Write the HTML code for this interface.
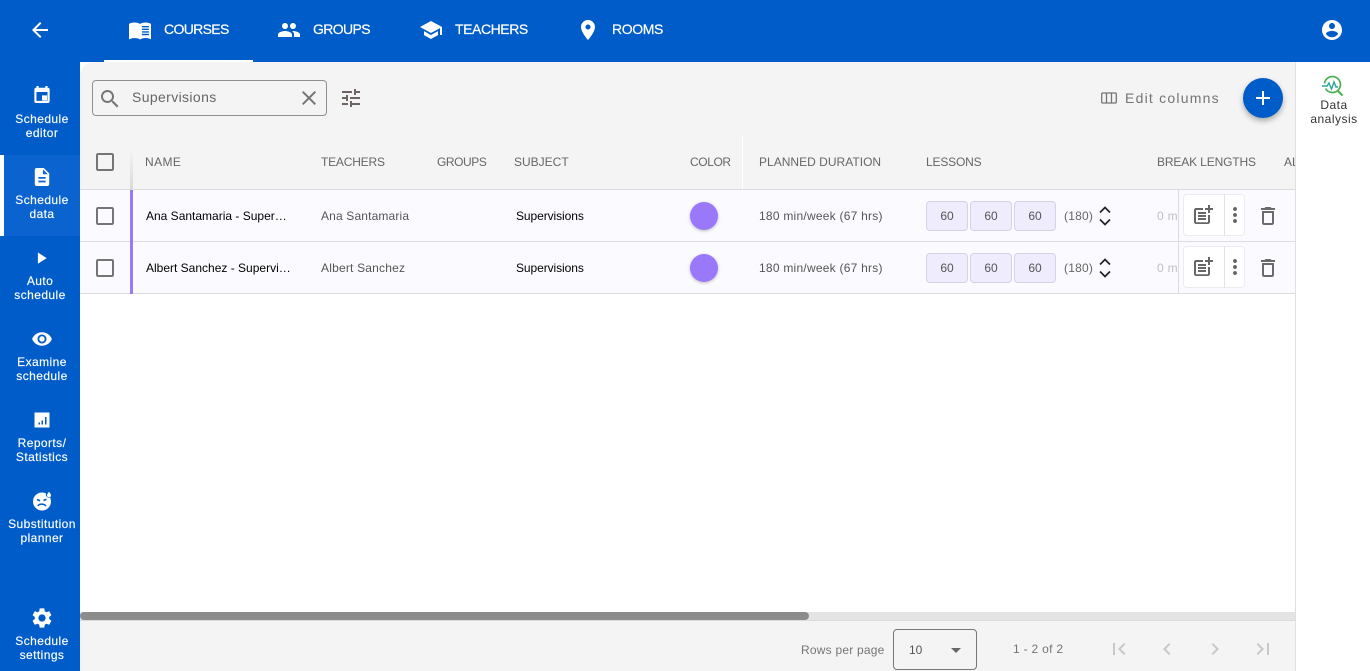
<!DOCTYPE html>
<html lang="en"><head><meta charset="utf-8"><title>Courses</title>
<style>
*{box-sizing:border-box}
html,body{margin:0;padding:0;width:1370px;height:671px;overflow:hidden;background:#fff;font-family:"Liberation Sans",Arial,sans-serif}
.a{position:absolute;white-space:nowrap}
svg{position:absolute;display:block}
#top{left:0;top:0;width:1370px;height:62px;background:#005cc9}
#side{left:0;top:62px;width:80px;height:609px;background:#005cc9}
#main{left:80px;top:62px;width:1215px;height:609px;background:#f4f4f4;border-top-left-radius:14px;overflow:hidden}
.tab{color:#fff;font-size:14px;line-height:16px;top:21px;-webkit-text-stroke:.2px #fff}
.nav{left:0;width:84px;text-align:center;color:#fff;font-size:12px;line-height:14px;white-space:nowrap;letter-spacing:.42px;-webkit-text-stroke:.15px #fff}
.h{font-size:12px;line-height:14px;top:155px;color:#666}
.t{font-size:12px;line-height:14px;color:#555}
.b{color:#000}
.chip{width:42px;height:30px;background:#efecfd;border:1px solid #d6d1e6;border-radius:4px;text-align:center;font-size:12px;line-height:28px;color:#555}
.bar{left:130px;width:3px;background:#9a78fa}
.row{left:80px;width:1215px;height:52px;background:#fbfaff;border-bottom:1px solid #dcdce0}
</style></head><body>

<div class="a" id="top"></div>
<div class="a" id="side"></div>
<div class="a" id="main"></div>
<div class="a" style="left:1295px;top:62px;width:75px;height:609px;background:#fff;border-left:1px solid #e0e0e0"></div>

<!-- top bar -->
<svg style="left:28px;top:18px" width="24" height="24" viewBox="0 0 24 24" fill="#fff"><path d="M20 11H7.83l5.59-5.59L12 4l-8 8 8 8 1.41-1.41L7.83 13H20v-2z"/></svg>
<div class="a" style="left:104px;top:60px;width:149px;height:2px;background:#fff"></div>
<svg style="left:128px;top:18px" width="24" height="24" viewBox="0 0 24 24" fill="#fff"><path d="M21 5c-1.11-.35-2.33-.5-3.5-.5-1.95 0-4.05.4-5.5 1.5-1.45-1.1-3.55-1.5-5.5-1.5S2.45 4.9 1 6v14.65c0 .25.25.5.5.5.1 0 .15-.05.25-.05C3.1 20.45 5.05 20 6.5 20c1.95 0 4.05.4 5.5 1.5 1.35-.85 3.8-1.5 5.5-1.5 1.65 0 3.35.3 4.75 1.05.1.05.15.05.25.05.25 0 .5-.25.5-.5V6c-.6-.45-1.25-.75-2-1z"/><path fill="#005cc9" d="M13.5 8h7v1.4h-7zM13.5 10.6h7V12h-7zM13.5 13.2h7v1.4h-7zM13.5 15.8h7v1.4h-7z" transform="translate(.4 0)"/></svg>
<div class="a tab" style="left:164px;letter-spacing:-.65px">COURSES</div>
<svg style="left:277px;top:18px" width="24" height="24" viewBox="0 0 24 24" fill="#fff"><path d="M16 11c1.66 0 2.99-1.34 2.99-3S17.66 5 16 5c-1.66 0-3 1.34-3 3s1.34 3 3 3zm-8 0c1.66 0 2.99-1.34 2.99-3S9.66 5 8 5C6.34 5 5 6.34 5 8s1.34 3 3 3zm0 2c-2.33 0-7 1.17-7 3.5V19h14v-2.5c0-2.33-4.67-3.5-7-3.5zm8 0c-.29 0-.62.02-.97.05 1.16.84 1.97 1.97 1.97 3.45V19h6v-2.5c0-2.33-4.67-3.5-7-3.5z"/></svg>
<div class="a tab" style="left:313px;letter-spacing:-.63px">GROUPS</div>
<svg style="left:419px;top:18px" width="24" height="24" viewBox="0 0 24 24" fill="#fff"><path d="M5 13.18v4L12 21l7-3.82v-4L12 17l-7-3.82zM12 3L1 9l11 6 9-4.91V17h2V9L12 3z"/></svg>
<div class="a tab" style="left:455px;letter-spacing:-.43px">TEACHERS</div>
<svg style="left:576px;top:18px" width="24" height="24" viewBox="0 0 24 24" fill="#fff"><path d="M12 2C8.13 2 5 5.13 5 9c0 5.25 7 13 7 13s7-7.75 7-13c0-3.87-3.13-7-7-7zm0 9.5c-1.38 0-2.5-1.12-2.5-2.5s1.12-2.5 2.5-2.5 2.5 1.12 2.5 2.5-1.12 2.5-2.5 2.5z"/></svg>
<div class="a tab" style="left:612px;letter-spacing:-.4px">ROOMS</div>
<svg style="left:1320px;top:18px" width="24" height="24" viewBox="0 0 24 24" fill="#fff"><path d="M12 2C6.48 2 2 6.48 2 12s4.48 10 10 10 10-4.48 10-10S17.52 2 12 2zm0 3c1.66 0 3 1.34 3 3s-1.34 3-3 3-3-1.34-3-3 1.34-3 3-3zm0 14.2c-2.5 0-4.71-1.28-6-3.22.03-1.99 4-3.08 6-3.08 1.99 0 5.97 1.09 6 3.08-1.29 1.94-3.5 3.22-6 3.22z"/></svg>

<!-- sidebar -->
<div class="a" style="left:0;top:155px;width:80px;height:81px;background:#0b63cf;border-left:4px solid #fff"></div>
<svg style="left:30px;top:84px" width="24" height="24" viewBox="0 0 24 24" fill="#fff"><path transform="translate(1.8 1.2) scale(.85)" d="M18 12h-6v6h6v-6zM16 1v2H8V1H5.500v2H5c-1.110 0-1.990.9-1.990 2L3 19c0 1.100.89 2 2 2h14c1.100 0 2-.9 2-2V5c0-1.100-.9-2-2-2h-.5V1H16zm2.500 17.500h-13V8h13v10.500z"/></svg>
<div class="a nav" style="top:112px">Schedule<br>editor</div>
<svg style="left:30px;top:165px" width="24" height="24" viewBox="0 0 24 24" fill="#fff"><path d="M14 2H6c-1.100 0-1.990.9-1.990 2L4 20c0 1.100.89 2 1.990 2H18c1.100 0 2-.9 2-2V8l-6-6zm2 16H8v-2h8v2zm0-4H8v-2h8v2zm-3-5V3.500L18.500 9H13z" transform="translate(1.200 1.200) scale(.9)"/></svg>
<div class="a nav" style="top:193px">Schedule<br>data</div>
<svg style="left:29px;top:246px" width="24" height="24" viewBox="0 0 24 24" fill="#fff"><path d="M8 5v14l11-7z" transform="translate(2.500 2.500) scale(.8)"/></svg>
<div class="a nav" style="left:-2px;top:274px">Auto<br>schedule</div>
<svg style="left:30px;top:327px" width="24" height="24" viewBox="0 0 24 24" fill="#fff"><path d="M12 4.500C7 4.500 2.730 7.610 1 12c1.730 4.390 6 7.500 11 7.500s9.270-3.110 11-7.500c-1.730-4.390-6-7.500-11-7.500zM12 17c-2.760 0-5-2.240-5-5s2.240-5 5-5 5 2.240 5 5-2.240 5-5 5zm0-8c-1.660 0-3 1.340-3 3s1.340 3 3 3 3-1.340 3-3-1.340-3-3-3z" transform="translate(1.200 1.200) scale(.9)"/></svg>
<div class="a nav" style="top:355px">Examine<br>schedule</div>
<svg style="left:30px;top:408px" width="24" height="24" viewBox="0 0 24 24" fill="#fff"><path fill-rule="evenodd" d="M4.500 4.500h15v15h-15zM8.500 14.500v2h1.500v-2zM11.500 12.500v4H13v-4zM15 9v7.500h1.500V9z"/></svg>
<div class="a nav" style="top:436px">Reports/<br>Statistics</div>
<svg style="left:30px;top:489px" width="24" height="24" viewBox="0 0 24 24"><circle cx="12" cy="12.500" r="9" fill="#fff"/><circle cx="19" cy="5.500" r="3.200" fill="#005cc9"/><path d="M19 2.800c1.300 1.600 2 2.500 2 3.500a2 2 0 0 1-4 0c0-1 .7-1.900 2-3.500z" fill="#fff"/><path d="M7 10.500l3 1.200M13.500 11.500l3-1.200M8 17c1-2.500 6-2.500 8 0" fill="none" stroke="#005cc9" stroke-width="1.600"/></svg>
<div class="a nav" style="top:517px">Substitution<br>planner</div>
<svg style="left:30px;top:606px" width="24" height="24" viewBox="0 0 24 24" fill="#fff"><path d="M19.140 12.940c.04-.3.06-.61.06-.94 0-.32-.02-.64-.07-.94l2.030-1.580c.18-.14.23-.41.12-.61l-1.920-3.320c-.12-.22-.37-.29-.59-.22l-2.390.96c-.5-.38-1.030-.7-1.620-.94l-.36-2.540c-.04-.24-.24-.41-.48-.41h-3.840c-.24 0-.43.17-.47.41l-.36 2.540c-.59.24-1.130.57-1.620.94l-2.390-.96c-.22-.08-.47 0-.59.22L2.740 8.870c-.12.21-.08.47.12.61l2.030 1.580c-.05.3-.09.63-.09.94s.02.64.07.94l-2.030 1.580c-.18.14-.23.41-.12.61l1.920 3.320c.12.22.37.29.59.22l2.390-.96c.5.38 1.030.7 1.620.94l.36 2.540c.05.24.24.41.48.41h3.840c.24 0 .44-.17.47-.41l.36-2.540c.59-.24 1.130-.56 1.620-.94l2.390.96c.22.08.47 0 .59-.22l1.920-3.320c.12-.22.07-.47-.12-.61l-2.010-1.580zM12 15.600c-1.980 0-3.600-1.620-3.600-3.600s1.620-3.600 3.600-3.600 3.600 1.620 3.600 3.600-1.620 3.600-3.600 3.600z"/></svg>
<div class="a nav" style="top:634px">Schedule<br>settings</div>

<!-- toolbar -->
<div class="a" style="left:92px;top:80px;width:235px;height:36px;border:1px solid #909090;border-radius:4px"></div>
<svg style="left:98px;top:87px" width="24" height="24" viewBox="0 0 24 24" fill="#757575"><path d="M15.500 14h-.79l-.28-.27C15.410 12.590 16 11.110 16 9.500 16 5.910 13.090 3 9.500 3S3 5.910 3 9.500 5.910 16 9.500 16c1.610 0 3.090-.59 4.230-1.570l.27.28v.79l5 4.990L20.490 19l-4.990-5zm-6 0C7.010 14 5 11.990 5 9.500S7.010 5 9.500 5 14 7.010 14 9.500 11.990 14 9.500 14z"/></svg>
<div class="a" style="left:132px;top:89px;font-size:14px;line-height:16px;color:#666;letter-spacing:.37px">Supervisions</div>
<svg style="left:297px;top:86px" width="24" height="24" viewBox="0 0 24 24" fill="#757575"><path d="M19 6.410L17.590 5 12 10.590 6.410 5 5 6.410 10.590 12 5 17.590 6.410 19 12 13.410 17.590 19 19 17.590 13.410 12z"/></svg>
<svg style="left:339px;top:86px" width="24" height="24" viewBox="0 0 24 24" fill="#6f6464"><path d="M3 17v2h6v-2H3zM3 5v2h10V5H3zm10 16v-2h8v-2h-8v-2h-2v6h2zM7 9v2H3v2h4v2h2V9H7zm14 4v-2H11v2h10zm-6-4h2V7h4V5h-4V3h-2v6z"/></svg>
<svg style="left:1100px;top:89px" width="18" height="18" viewBox="0 0 18 18" fill="none" stroke="#757575" stroke-width="1.300"><rect x="1.700" y="4" width="14.600" height="10" rx="1"/><path d="M6.500 4v10M11.500 4v10"/></svg>
<div class="a" style="left:1125px;top:90px;font-size:14px;line-height:16px;color:#757575;letter-spacing:1.23px">Edit columns</div>
<div class="a" style="left:1243px;top:78px;width:40px;height:40px;border-radius:50%;background:#005cc9;box-shadow:0 3px 6px rgba(0,0,0,.3)"></div>
<svg style="left:1251px;top:86px" width="24" height="24" viewBox="0 0 24 24" fill="#fff"><path d="M19 13h-6v6h-2v-6H5v-2h6V5h2v6h6v2z"/></svg>

<!-- right panel -->
<svg style="left:1321px;top:74px" width="24" height="24" viewBox="0 0 24 24" fill="none"><path d="M3.500 9.500a8 8 0 1 1 1 5" stroke="#4caf50" stroke-width="1.700"/><path d="M16.500 16.500l5 5" stroke="#4caf50" stroke-width="2"/><path d="M1 12h5l2-3 2.500 6 2.500-7 2 5h2" stroke="#26a69a" stroke-width="1.400"/></svg>
<div class="a" style="left:1297px;width:74px;top:98px;text-align:center;font-size:12px;line-height:14px;color:#333;letter-spacing:.5px">Data<br>analysis</div>

<!-- table header -->
<div class="a" style="left:80px;top:189px;width:1215px;height:1px;background:#dcdcdc"></div>
<div class="a" style="left:130px;top:150px;width:3px;height:40px;background:linear-gradient(#f4f4f4,#d8d8d8)"></div>
<div class="a" style="left:742px;top:135px;width:1px;height:54px;background:#fff"></div>
<svg style="left:93px;top:150px" width="24" height="24" viewBox="0 0 24 24" fill="#757575"><path d="M19 5v14H5V5h14m0-2H5c-1.100 0-2 .9-2 2v14c0 1.100.9 2 2 2h14c1.100 0 2-.9 2-2V5c0-1.100-.9-2-2-2z"/></svg>
<div class="a h" style="left:145px;letter-spacing:.4px">NAME</div>
<div class="a h" style="left:321px;letter-spacing:-.2px">TEACHERS</div>
<div class="a h" style="left:437px;letter-spacing:-.43px">GROUPS</div>
<div class="a h" style="left:514px;letter-spacing:0">SUBJECT</div>
<div class="a h" style="left:690px;letter-spacing:-.4px">COLOR</div>
<div class="a h" style="left:759px;letter-spacing:.02px">PLANNED DURATION</div>
<div class="a h" style="left:926px;letter-spacing:-.17px">LESSONS</div>
<div class="a h" style="left:1157px;letter-spacing:-.14px">BREAK LENGTHS</div>
<div class="a h" style="left:1284px;width:11px;overflow:hidden">ALL</div>

<!-- row 1 -->
<div class="a row" style="top:190px"></div>
<div class="a bar" style="top:190px;height:52px"></div>
<svg style="left:93px;top:204px" width="24" height="24" viewBox="0 0 24 24" fill="#757575"><path d="M19 5v14H5V5h14m0-2H5c-1.100 0-2 .9-2 2v14c0 1.100.9 2 2 2h14c1.100 0 2-.9 2-2V5c0-1.100-.9-2-2-2z"/></svg>
<div class="a t b" style="left:146px;top:209px">Ana Santamaria - Super…</div>
<div class="a t" style="left:321px;top:209px;letter-spacing:.15px">Ana Santamaria</div>
<div class="a t b" style="left:516px;top:209px;letter-spacing:-.08px">Supervisions</div>
<div class="a" style="left:690px;top:202px;width:28px;height:28px;border-radius:50%;background:#9a78fa;box-shadow:0 1px 3px rgba(0,0,0,.25)"></div>
<div class="a t" style="left:759px;top:209px;letter-spacing:.24px">180 min/week (67 hrs)</div>
<div class="a chip" style="left:926px;top:201px">60</div>
<div class="a chip" style="left:970px;top:201px">60</div>
<div class="a chip" style="left:1014px;top:201px">60</div>
<div class="a t" style="left:1064px;top:209px;color:#666;letter-spacing:.2px">(180)</div>
<svg style="left:1097px;top:204px" width="16" height="24" viewBox="0 0 16 24" fill="none" stroke="#222" stroke-width="1.700"><path d="M3 8.500l5-5 5 5M3 15.500l5 5 5-5"/></svg>
<div class="a t" style="left:1157px;top:209px;color:#bfbfc8;letter-spacing:.3px">0 m</div>

<!-- row 2 -->
<div class="a row" style="top:242px"></div>
<div class="a bar" style="top:242px;height:52px"></div>
<svg style="left:93px;top:256px" width="24" height="24" viewBox="0 0 24 24" fill="#757575"><path d="M19 5v14H5V5h14m0-2H5c-1.100 0-2 .9-2 2v14c0 1.100.9 2 2 2h14c1.100 0 2-.9 2-2V5c0-1.100-.9-2-2-2z"/></svg>
<div class="a t b" style="left:146px;top:261px">Albert Sanchez - Supervi…</div>
<div class="a t" style="left:321px;top:261px;letter-spacing:.2px">Albert Sanchez</div>
<div class="a t b" style="left:516px;top:261px;letter-spacing:-.08px">Supervisions</div>
<div class="a" style="left:690px;top:254px;width:28px;height:28px;border-radius:50%;background:#9a78fa;box-shadow:0 1px 3px rgba(0,0,0,.25)"></div>
<div class="a t" style="left:759px;top:261px;letter-spacing:.24px">180 min/week (67 hrs)</div>
<div class="a chip" style="left:926px;top:253px">60</div>
<div class="a chip" style="left:970px;top:253px">60</div>
<div class="a chip" style="left:1014px;top:253px">60</div>
<div class="a t" style="left:1064px;top:261px;color:#666;letter-spacing:.2px">(180)</div>
<svg style="left:1097px;top:256px" width="16" height="24" viewBox="0 0 16 24" fill="none" stroke="#222" stroke-width="1.700"><path d="M3 8.500l5-5 5 5M3 15.500l5 5 5-5"/></svg>
<div class="a t" style="left:1157px;top:261px;color:#bfbfc8;letter-spacing:.3px">0 m</div>

<!-- sticky actions -->
<div class="a" style="left:1178px;top:190px;width:117px;height:51px;background:#fbfaff;border-left:1px solid #dcdce0"></div>
<div class="a" style="left:1178px;top:242px;width:117px;height:51px;background:#fbfaff;border-left:1px solid #dcdce0"></div>
<div class="a" style="left:1183px;top:194px;width:62px;height:42px;background:#fff;border:1px solid #ececf0;border-radius:4px"></div>
<div class="a" style="left:1224px;top:194px;width:1px;height:42px;background:#e2e2e6"></div>
<div class="a" style="left:1183px;top:246px;width:62px;height:42px;background:#fff;border:1px solid #ececf0;border-radius:4px"></div>
<div class="a" style="left:1224px;top:246px;width:1px;height:42px;background:#e2e2e6"></div>
<svg style="left:1191px;top:203px" width="24" height="24" viewBox="0 0 24 24" fill="#666"><path d="M17 19.220H5V7h7V5H5c-1.100 0-2 .9-2 2v12c0 1.100.9 2 2 2h12c1.100 0 2-.9 2-2v-7h-2v7.220zM19 2h-2v3h-3c.01.01 0 2 0 2h3v2.990c.01.01 2 0 2 0V7h3V5h-3V2zM7 9h8v2H7zm0 3v2h8v-2h-3zm0 3h8v2H7z"/></svg>
<svg style="left:1191px;top:255px" width="24" height="24" viewBox="0 0 24 24" fill="#666"><path d="M17 19.220H5V7h7V5H5c-1.100 0-2 .9-2 2v12c0 1.100.9 2 2 2h12c1.100 0 2-.9 2-2v-7h-2v7.220zM19 2h-2v3h-3c.01.01 0 2 0 2h3v2.990c.01.01 2 0 2 0V7h3V5h-3V2zM7 9h8v2H7zm0 3v2h8v-2h-3zm0 3h8v2H7z"/></svg>
<svg style="left:1223px;top:203px" width="24" height="24" viewBox="0 0 24 24" fill="#666"><path d="M12 8c1.100 0 2-.9 2-2s-.9-2-2-2-2 .9-2 2 .9 2 2 2zm0 2c-1.100 0-2 .9-2 2s.9 2 2 2 2-.9 2-2-.9-2-2-2zm0 6c-1.100 0-2 .9-2 2s.9 2 2 2 2-.9 2-2-.9-2-2-2z"/></svg>
<svg style="left:1223px;top:255px" width="24" height="24" viewBox="0 0 24 24" fill="#666"><path d="M12 8c1.100 0 2-.9 2-2s-.9-2-2-2-2 .9-2 2 .9 2 2 2zm0 2c-1.100 0-2 .9-2 2s.9 2 2 2 2-.9 2-2-.9-2-2-2zm0 6c-1.100 0-2 .9-2 2s.9 2 2 2 2-.9 2-2-.9-2-2-2z"/></svg>
<svg style="left:1256px;top:204px" width="24" height="24" viewBox="0 0 24 24" fill="#6b6b6b"><path d="M6 19c0 1.100.9 2 2 2h8c1.100 0 2-.9 2-2V7H6v12zM8 9h8v10H8V9zm7.500-5l-1-1h-5l-1 1H5v2h14V4z"/></svg>
<svg style="left:1256px;top:256px" width="24" height="24" viewBox="0 0 24 24" fill="#6b6b6b"><path d="M6 19c0 1.100.9 2 2 2h8c1.100 0 2-.9 2-2V7H6v12zM8 9h8v10H8V9zm7.500-5l-1-1h-5l-1 1H5v2h14V4z"/></svg>

<!-- empty area + scrollbar -->
<div class="a" style="left:80px;top:294px;width:1215px;height:318px;background:#fff"></div>
<div class="a" style="left:80px;top:612px;width:1215px;height:8px;background:#e4e4e4"></div>
<div class="a" style="left:80px;top:612px;width:729px;height:8px;background:#8c8c8c;border-radius:4px"></div>
<div class="a" style="left:80px;top:620px;width:1215px;height:1px;background:#dcdcdc"></div>

<!-- footer -->
<div class="a" style="left:801px;top:643px;font-size:12px;line-height:14px;color:#757575;letter-spacing:.22px">Rows per page</div>
<div class="a" style="left:893px;top:629px;width:84px;height:41px;border:1px solid #777;border-radius:4px"></div>
<div class="a" style="left:909px;top:643px;font-size:12px;line-height:14px;color:#555">10</div>
<svg style="left:944px;top:638px" width="24" height="24" viewBox="0 0 24 24" fill="#666"><path d="M7 10l5 5 5-5z"/></svg>
<div class="a" style="left:1013px;top:642px;font-size:12px;line-height:14px;color:#757575;letter-spacing:.3px">1 - 2 of 2</div>
<svg style="left:1107px;top:637px" width="24" height="24" viewBox="0 0 24 24" fill="#c8c8c8"><path d="M18.410 16.590L13.820 12l4.590-4.590L17 6l-6 6 6 6zM6 6h2v12H6z"/></svg>
<svg style="left:1155px;top:637px" width="24" height="24" viewBox="0 0 24 24" fill="#c8c8c8"><path d="M15.410 7.410L14 6l-6 6 6 6 1.410-1.410L10.830 12z"/></svg>
<svg style="left:1203px;top:637px" width="24" height="24" viewBox="0 0 24 24" fill="#c8c8c8"><path d="M10 6L8.590 7.410 13.170 12l-4.580 4.590L10 18l6-6z"/></svg>
<svg style="left:1251px;top:637px" width="24" height="24" viewBox="0 0 24 24" fill="#c8c8c8"><path d="M5.590 7.410L10.180 12l-4.590 4.590L7 18l6-6-6-6zM16 6h2v12h-2z"/></svg>

</body></html>
